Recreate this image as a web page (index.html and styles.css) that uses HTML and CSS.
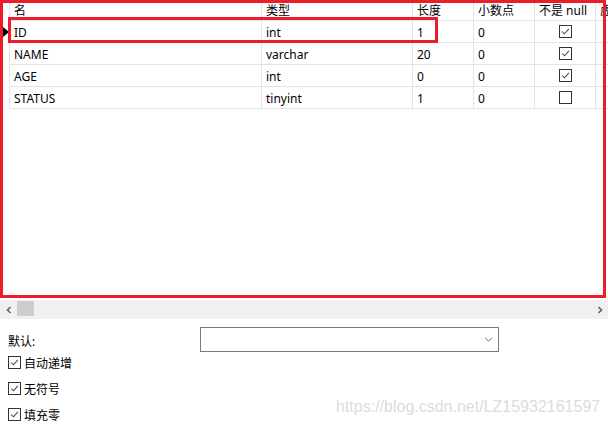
FILE: index.html
```html
<!DOCTYPE html>
<html>
<head>
<meta charset="utf-8">
<link rel="stylesheet" href="styles.css">
</head>
<body>
<div class="page">
  <div class="gridwrap">
    <div class="table">
      <div class="c ind"></div><div class="c">名</div><div class="c">类型</div><div class="c">长度</div><div class="c">小数点</div><div class="c">不是 null</div><div class="c last">虚拟</div>

      <div class="c ind hdr"><span class="tri"></span></div><div class="c row">ID</div><div class="c row">int</div><div class="c row">1</div><div class="c row">0</div><div class="c row ctr"><span class="cb on"><svg viewBox="0 0 13 13"><polyline points="2.5,6.5 5.2,9.2 10.5,3.5"/></svg></span></div><div class="c row last"></div>

      <div class="c ind"></div><div class="c row">NAME</div><div class="c row">varchar</div><div class="c row">20</div><div class="c row">0</div><div class="c row ctr"><span class="cb on"><svg viewBox="0 0 13 13"><polyline points="2.5,6.5 5.2,9.2 10.5,3.5"/></svg></span></div><div class="c row last"></div>

      <div class="c ind"></div><div class="c row">AGE</div><div class="c row">int</div><div class="c row">0</div><div class="c row">0</div><div class="c row ctr"><span class="cb on"><svg viewBox="0 0 13 13"><polyline points="2.5,6.5 5.2,9.2 10.5,3.5"/></svg></span></div><div class="c row last"></div>

      <div class="c ind"></div><div class="c row">STATUS</div><div class="c row">tinyint</div><div class="c row">1</div><div class="c row">0</div><div class="c row ctr"><span class="cb"></span></div><div class="c row last"></div>
    </div>
    <div class="redbox outer"></div>
    <div class="redbox rowmark"></div>
  </div>

  <div class="hscroll">
    <span class="arrow"><svg viewBox="0 0 8 8"><polyline points="5.5,1 2.5,4 5.5,7"/></svg></span>
    <span class="thumb"></span>
    <span class="track"></span>
    <span class="arrow"><svg viewBox="0 0 8 8"><polyline points="2.5,1 5.5,4 2.5,7"/></svg></span>
  </div>

  <div class="props">
    <div class="defrow">
      <span class="deflabel">默认:</span>
      <div class="select"><svg viewBox="0 0 10 6"><polyline points="1,1 5,5 9,1"/></svg></div>
    </div>
    <div class="opts">
      <label class="opt"><span class="cb on"><svg viewBox="0 0 13 13"><polyline points="2.5,6.5 5.2,9.2 10.5,3.5"/></svg></span>自动递增</label>
      <label class="opt"><span class="cb on"><svg viewBox="0 0 13 13"><polyline points="2.5,6.5 5.2,9.2 10.5,3.5"/></svg></span>无符号</label>
      <label class="opt"><span class="cb on"><svg viewBox="0 0 13 13"><polyline points="2.5,6.5 5.2,9.2 10.5,3.5"/></svg></span>填充零</label>
    </div>
    <div class="watermark">https://blog.csdn.net/LZ15932161597</div>
  </div>
</div>
</body>
</html>
```
FILE: styles.css
```css
* { box-sizing: border-box; }
html, body { margin: 0; padding: 0; background: #fff; }
body {
  font-family: "Noto Sans", "Noto Sans CJK SC", sans-serif;
  font-size: 12px;
  color: #000;
}
.page { width: 608px; height: 426px; position: relative; overflow: hidden; }

.gridwrap { position: relative; height: 300px; background: #fff; overflow: hidden; }
.table {
  display: grid;
  grid-template-columns: 10px 252px 151px 61px 61px 61px 40px;
  grid-template-rows: 21px 22px 22px 22px 22px;
}
.c {
  border-right: 1px solid #e3e3e3;
  border-bottom: 1px solid #e3e3e3;
  padding-left: 4px;
  padding-top: 2px;
  display: flex;
  align-items: center;
  white-space: nowrap;
  overflow: hidden;
  line-height: 1;
}
.c.ind { padding: 0; border-bottom-color: transparent; }
.c.last { border-right: none; }
.c.ctr { justify-content: center; padding-left: 0; padding-top: 0; }
.tri {
  width: 0; height: 0;
  border-top: 5px solid transparent;
  border-bottom: 5px solid transparent;
  border-left: 6px solid #000;
  margin-left: 3px;
}
.cb {
  width: 13px; height: 13px;
  border: 1px solid #333;
  background: #fff;
  display: inline-flex;
  flex: none;
}
.cb svg { width: 11px; height: 11px; display: none; }
.cb.on svg { display: block; }
.cb svg polyline { fill: none; stroke: #444; stroke-width: 1.2; }

.redbox { position: absolute; border: 3px solid #ec1c2b; pointer-events: none; }
.outer { left: 0; top: 0; width: 606px; height: 298px; }
.rowmark { left: 8px; top: 17px; width: 430px; height: 26px; }

.hscroll {
  height: 19px;
  background: #f0f0f0;
  display: flex;
  align-items: stretch;
}
.arrow { width: 17px; display: flex; align-items: center; justify-content: center; }
.arrow svg { width: 8px; height: 8px; }
.arrow polyline { fill: none; stroke: #606060; stroke-width: 1.6; }
.thumb { width: 17px; background: #cdcdcd; margin: 1px 0 3px; }
.track { flex: 1; }

.props { position: relative; padding: 8px 8px 0; height: 107px; }
.defrow { display: flex; align-items: center; height: 25px; }
.deflabel { width: 192px; padding-top: 2px; }
.select {
  width: 299px; height: 25px;
  border: 1px solid #7a7a7a;
  display: flex; align-items: center; justify-content: flex-end;
  padding-right: 5px;
}
.select svg { width: 9px; height: 5px; }
.select polyline { fill: none; stroke: #555; stroke-width: 1.1; }

.opts { display: flex; flex-direction: column; gap: 11px; margin-top: 3px; }
.opt { display: flex; align-items: center; gap: 3px; height: 15px; }

.watermark {
  position: absolute;
  left: 336px; top: 79px;
  font-family: "Liberation Sans", Arial, sans-serif;
  font-size: 16px;
  color: #dcdcdc;
  white-space: nowrap;
}
```
